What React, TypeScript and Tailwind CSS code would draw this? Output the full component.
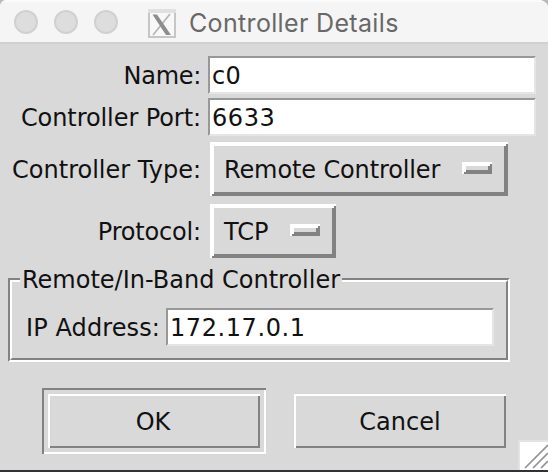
import React from "react";

const raised = "border-t-white border-l-white border-b-[#828282] border-r-[#828282]";

// Two stacked 2px bevel steps; earlier shadows paint over later ones.
const thinBevel =
  "shadow-[inset_0_2px_#fff,inset_2px_0_#fff,inset_0_-2px_#828282,inset_-2px_0_#828282]";
const thickBevel =
  "shadow-[inset_0_2px_#fff,inset_2px_0_#fff,inset_0_-2px_#828282,inset_-2px_0_#828282,inset_0_4px_#fff,inset_4px_0_#fff,inset_0_-4px_#828282,inset_-4px_0_#828282]";

function Label({ text, className }: { text: string; className: string }) {
  return <span className={`shrink-0 pt-[2px] text-right ${className}`}>{text}</span>;
}

function Entry({ value, textClass = "" }: { value: string; textClass?: string }) {
  return (
    <div className="flex h-[38px] w-[328px] shrink-0 items-center border-2 border-t-[#989898] border-l-[#989898] border-b-[#e5e5e5] border-r-[#e5e5e5] bg-white pl-[2px]">
      <span className={`pt-[2px] ${textClass}`}>{value}</span>
    </div>
  );
}

function OptionMenu({ value, className, textClass }: { value: string; className: string; textClass: string }) {
  return (
    <div className={`flex h-[54px] shrink-0 items-center justify-between pl-[14px] pr-4 ${thickBevel} ${className}`}>
      <span className={`pt-[2px] ${textClass}`}>{value}</span>
      <span className={`mb-[2px] h-3 w-[30px] ${thickBevel}`} />
    </div>
  );
}

function Button({ text, className = "" }: { text: string; className?: string }) {
  return (
    <div className={`flex h-[54px] w-[212px] items-center justify-center pt-[2px] ${thinBevel} ${className}`}>{text}</div>
  );
}

function TitleBar() {
  return (
    <div className="relative flex h-11 shrink-0 items-center border-b-2 border-[#d0d0d0] border-t-2 border-t-[#fbfbfb] bg-[#f5f5f5] pl-[14px]">
      <div className="flex gap-4">
        <span className="size-6 rounded-full border-2 border-[#d0d0d0] bg-[#dddddd]" />
        <span className="size-6 rounded-full border-2 border-[#d0d0d0] bg-[#dddddd]" />
        <span className="size-6 rounded-full border-2 border-[#d0d0d0] bg-[#dddddd]" />
      </div>
      <svg className="ml-[30px] mt-[3px] shrink-0" width="28" height="29" viewBox="0 0 28 29">
        <rect x="1" y="1" width="26" height="27" fill="#f8f8f8" stroke="#c6c6c6" strokeWidth="2" />
        <path d="M0 2H28" stroke="#e0e0e0" strokeWidth="4" />
        <path d="M22 5L5 26" stroke="#b5b5b5" strokeWidth="1.7" />
        <path d="M4.5 5.5h4.5L23 26h-5z" fill="#8d8d8d" />
      </svg>
      <span className="ml-[13px] mt-[2px] whitespace-nowrap font-['Inter',sans-serif] text-[25px] leading-8 tracking-[0.34px] text-[#686868]">
        Controller Details
      </span>
      <svg className="absolute -top-[2px] left-0" width="548" height="6" viewBox="0 0 548 6">
        <path d="M0 0H5Q1 1 0 5zM548 0H541Q547 2 548 6z" fill="#b9b9b9" />
      </svg>
    </div>
  );
}

export default function App() {
  return (
    <div className="relative flex h-[472px] w-[548px] flex-col overflow-hidden whitespace-pre border-b-2 border-[#303136] bg-[#d9d9d9] font-['DejaVu_Sans',sans-serif] text-[24px] leading-7 text-[#111111]">
      <TitleBar />
      <div className="mt-3 flex flex-col">
        <div className="flex items-center">
          <Label text="Name:" className="mr-[7px] w-[201px] tracking-[-0.3px]" />
          <Entry value="c0" textClass="tracking-[0.3px]" />
        </div>
        <div className="mt-1 flex items-center">
          <Label text="Controller Port:" className="mr-[7px] w-[201px] tracking-[-0.08px]" />
          <Entry value="6633" textClass="tracking-[0.6px]" />
        </div>
        <div className="mt-[6px] flex items-center">
          <Label text="Controller Type:" className="mr-[9px] w-[201px]" />
          <OptionMenu value="Remote Controller" className="w-[298px]" textClass="tracking-[-0.12px]" />
        </div>
        <div className="mt-2 flex items-center">
          <Label text="Protocol:" className="mr-[9px] w-[201px] tracking-[-0.18px]" />
          <OptionMenu value="TCP" className="w-[126px]" textClass="" />
        </div>
      </div>
      <div className="relative ml-2 mt-5 h-[84px] w-[502px] shrink-0 border-2 border-b-white border-l-[#828282] border-r-white border-t-[#828282]">
        <div className={`flex h-full items-center border-2 pl-[12px] pt-[14px] ${raised}`}>
          <Label text="IP Address:" className="mr-[6px] w-[136px] tracking-[0.1px]" />
          <Entry value="172.17.0.1" textClass="tracking-[0.58px]" />
        </div>
        <span className="absolute left-[10px] top-[-14px] w-[322px] bg-[#d9d9d9] pl-[2px]">Remote/In-Band Controller</span>
      </div>
      <div className="ml-[42px] mt-[26px] flex shrink-0 items-center gap-7">
        <div className="p-[6px] shadow-[inset_0_2px_#828282,inset_2px_0_#828282,inset_0_-2px_#fff,inset_-2px_0_#fff]">
          <Button text="OK" className="pr-[2px]" />
        </div>
        <Button text="Cancel" />
      </div>
      <svg className="absolute bottom-0 right-0" width="30" height="30" viewBox="0 0 30 30">
        <path d="M0 0H30V30H0z" fill="#e3e3e3" />
        <path d="M2 2H30V30H2z" fill="#fff" />
        <path d="M7 28L30 5M15 28L30 13M23 28L30 21" stroke="#929292" strokeWidth="1.7" />
      </svg>
    </div>
  );
}
